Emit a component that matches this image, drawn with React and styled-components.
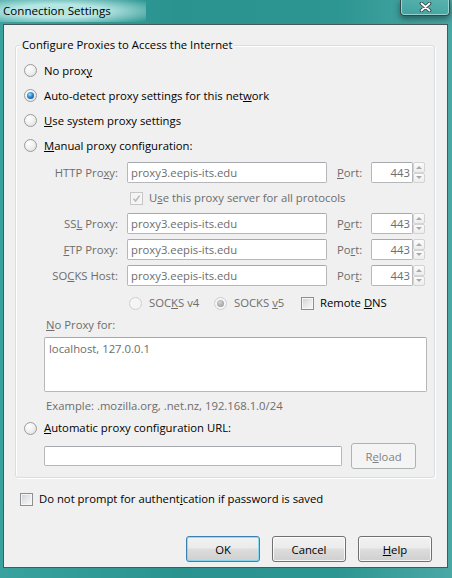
import React from 'react';
import styled, { createGlobalStyle } from 'styled-components';

const GlobalStyle = createGlobalStyle`
    html, body {
        margin: 0;
        padding: 0;
    }
    body {
        width: 452px;
        height: 578px;
        overflow: hidden;
        background: #3a9e9a;
        font-family: 'Open Sans', 'Noto Sans', sans-serif;
        font-size: 11.3px;
        color: #000;
    }
`;

const gray = '#6d6d6d';

// Window chrome
const Window = styled.div`
    width: 452px;
    height: 578px;
    display: flex;
    flex-direction: column;
    background: linear-gradient(90deg, #3aa29e 0%, #2b938f 40%, #2e9692 75%, #4aa8a5 100%);
`;

const TitleBar = styled.div`
    height: 24px;
    flex: none;
    display: flex;
    justify-content: space-between;
    align-items: flex-start;
`;

const Title = styled.span`
    padding: 3px 35px 3px 3px;
    line-height: 16px;
    font-size: 11.6px;
    white-space: nowrap;
    background: radial-gradient(ellipse 78% 75% at 40% 50%, rgba(196, 238, 236, 0.9) 40%, rgba(196, 238, 236, 0) 100%);
`;

const CloseButton = styled.div`
    width: 50px;
    height: 17px;
    margin: -1px 2px 0 0;
    box-sizing: border-box;
    border: 1px solid #33484a;
    border-top: none;
    border-radius: 0 0 4px 4px;
    background: linear-gradient(rgba(120, 200, 198, 0.35), rgba(70, 165, 162, 0.4));
    box-shadow: inset 0 0 0 1px rgba(220, 245, 244, 0.55), 0 3px 6px rgba(20, 40, 40, 0.55);
    display: flex;
    align-items: center;
    justify-content: center;
`;

const Client = styled.div`
    height: 544px;
    margin: 0 4px 0 3px;
    box-sizing: border-box;
    border: 1px solid #4b5656;
    background: #f0f0f0;
    display: flex;
    flex-direction: column;
`;

// Group box
const GroupBox = styled.div`
    position: relative;
    margin: 20px 12px 0 11px;
    padding: 12px 0 8px 8px;
    border: 1px solid #d5dfe5;
    border-radius: 3px;
    box-shadow: inset 1px 1px 0 #fff, 1px 1px 0 #fff;
    display: flex;
    flex-direction: column;
`;

const Caption = styled.span`
    position: absolute;
    top: -9px;
    left: 5px;
    padding: 0 1px;
    line-height: 16px;
    background: #f0f0f0;
`;

const Key = styled.u`
    text-decoration: underline;
    text-underline-offset: 1px;
    text-decoration-thickness: 1px;
`;

// Radio and checkbox
const Choice = styled.label`
    display: flex;
    align-items: center;
    gap: ${({ $gap }) => $gap ?? 7}px;
    height: ${({ $height }) => $height ?? 25}px;
    margin-left: ${({ $indent }) => $indent ?? 0}px;
    line-height: 16px;
    white-space: nowrap;
    color: ${({ $disabled }) => ($disabled ? gray : '#000')};
`;

const RadioRing = styled.span`
    flex: none;
    width: 13px;
    height: 13px;
    box-sizing: border-box;
    border-radius: 50%;
    border: 1px solid ${({ $disabled }) => ($disabled ? '#cfcfcf' : '#9a9c9d')};
    background: ${({ $disabled }) =>
        $disabled
            ? '#f5f5f5'
            : 'radial-gradient(circle at 35% 30%, #ffffff 0%, #eeeeee 55%, #d6d8da 100%)'};
    display: flex;
    align-items: center;
    justify-content: center;
`;

const RadioDot = styled.span`
    width: 7px;
    height: 7px;
    border-radius: 50%;
    background: ${({ $disabled }) =>
        $disabled
            ? 'radial-gradient(circle at 40% 35%, #d6d6d6, #a3a3a3 70%, #8e8e8e)'
            : 'radial-gradient(circle at 40% 35%, #9fe0ff 0%, #2e86cc 45%, #0e3f74 100%)'};
`;

const Box = styled.span`
    flex: none;
    width: 13px;
    height: 13px;
    box-sizing: border-box;
    border: 1px solid ${({ $disabled }) => ($disabled ? '#c6c6c6' : '#8e8f8f')};
    box-shadow: inset 0 0 0 1px #f6f6f6;
    background: ${({ $disabled }) =>
        $disabled ? '#f4f4f4' : 'linear-gradient(135deg, #cdd0d5 0%, #ebecee 60%, #f8f8f8 100%)'};
    display: flex;
    align-items: center;
    justify-content: center;
`;

const Radio = ({ checked, disabled, children, ...rest }) => (
    <Choice $disabled={disabled} {...rest}>
        <RadioRing $disabled={disabled}>{checked && <RadioDot $disabled={disabled} />}</RadioRing>
        <span>{children}</span>
    </Choice>
);

const Check = ({ checked, disabled, children, ...rest }) => (
    <Choice $disabled={disabled} $gap={6} {...rest}>
        <Box $disabled={disabled}>
            {checked && (
                <svg width="9" height="9" viewBox="0 0 9 9">
                    <path d="M1.5 4.8 L3.6 7 L7.6 1.6" fill="none" stroke={disabled ? '#b8b8b8' : '#1f3f7a'} strokeWidth="1.5" />
                </svg>
            )}
        </Box>
        <span>{children}</span>
    </Choice>
);

// Proxy fields
const FieldRow = styled.div`
    display: flex;
    align-items: center;
    height: 21px;
    margin-top: ${({ $top }) => $top ?? 0}px;
`;

const FieldLabel = styled.span`
    width: 94px;
    margin-right: 9px;
    text-align: right;
    white-space: nowrap;
    color: ${gray};
`;

const TextBox = styled.input`
    box-sizing: border-box;
    width: ${({ $width }) => $width}px;
    height: ${({ $height }) => $height ?? 21}px;
    margin: 0 0 0 ${({ $indent }) => $indent ?? 0}px;
    padding: 0 ${({ $right }) => ($right ? 2 : 0)}px 0 ${({ $right }) => ($right ? 0 : 3)}px;
    border: 1px solid #b5b7bb;
    border-top-color: #a5a8ad;
    border-radius: 2px;
    background: #fff;
    font: inherit;
    color: ${gray};
    text-align: ${({ $right }) => ($right ? 'right' : 'left')};
    outline: none;
`;

const PortLabel = styled.span`
    width: 34px;
    margin-left: 10px;
    color: ${gray};
`;

const Spin = styled.div`
    display: flex;
    flex-direction: column;
    width: 12px;
    height: 21px;
`;

const SpinButton = styled.span`
    flex: 1;
    box-sizing: border-box;
    border: 1px solid #d3d3d3;
    border-radius: 2px;
    background: linear-gradient(#fbfbfb, #ededed);
    display: flex;
    align-items: center;
    justify-content: center;
    &::before {
        content: '';
        border-left: 3px solid transparent;
        border-right: 3px solid transparent;
        ${({ $down }) => ($down ? 'border-top: 3px solid #a9a9a9;' : 'border-bottom: 3px solid #a9a9a9;')}
    }
`;

const SocksRow = styled.div`
    display: grid;
    grid-template-columns: 85px 87px auto;
    height: 22px;
    margin: 6px 0 0 105px;
    align-items: center;
`;

const NoteRow = styled.div`
    height: ${({ $height }) => $height}px;
    display: flex;
    align-items: center;
    padding-left: 22px;
    line-height: 16px;
    color: ${gray};
`;

const Exceptions = styled.textarea`
    box-sizing: border-box;
    width: 383px;
    height: 55px;
    margin: 1px 0 0 20px;
    padding: 3px 4px;
    border: 1px solid #b5b7bb;
    border-top-color: #a5a8ad;
    border-radius: 2px;
    background: #fff;
    font: inherit;
    line-height: 16px;
    color: ${gray};
    resize: none;
    outline: none;
`;

const UrlRow = styled.div`
    display: flex;
    align-items: center;
    height: 26px;
    margin-top: 7px;
    gap: 9px;
`;

// Buttons
const Button = styled.button`
    box-sizing: border-box;
    width: ${({ $width }) => $width ?? 74}px;
    height: 26px;
    padding: 0;
    font: inherit;
    color: #000;
    border: 1px solid ${({ $primary }) => ($primary ? '#3c7fb1' : '#707070')};
    border-radius: 3px;
    background: linear-gradient(#f2f2f2 0%, #ebebeb 46%, #dddddd 50%, #cfcfcf 100%);
    box-shadow: inset 0 0 0 1px ${({ $primary }) => ($primary ? 'rgba(110, 215, 245, 0.75)' : 'rgba(255, 255, 255, 0.8)')};
    &:disabled {
        border-color: #adb2b5;
        background: #f4f4f4;
        box-shadow: none;
        color: #838383;
    }
`;

const ButtonBar = styled.div`
    display: flex;
    justify-content: flex-end;
    gap: 12px;
    margin-top: 29px;
    padding-right: 15px;
`;

const ports = [
    { label: <>SS<Key>L</Key> Proxy:</>, port: <>P<Key>o</Key>rt:</>, top: 0 },
    { label: <><Key>F</Key>TP Proxy:</>, port: <>Po<Key>r</Key>t:</>, top: 5 },
    { label: <>SO<Key>C</Key>KS Host:</>, port: <>Por<Key>t</Key>:</>, top: 5 },
];

const ProxyField = ({ label, port, top }) => (
    <FieldRow $top={top}>
        <FieldLabel>{label}</FieldLabel>
        <TextBox $width={200} value="proxy3.eepis-its.edu" readOnly />
        <PortLabel>{port}</PortLabel>
        <TextBox $width={42} $right value="443" readOnly />
        <Spin>
            <SpinButton />
            <SpinButton $down />
        </Spin>
    </FieldRow>
);

export default function App() {
    return (
        <>
            <GlobalStyle />
            <Window>
                <TitleBar>
                    <Title>Connection Settings</Title>
                    <CloseButton>
                        <svg width="13" height="10" viewBox="0 0 13 10">
                            <path d="M2.5 1.5 L10.5 8.5 M10.5 1.5 L2.5 8.5" stroke="#2c3a3c" strokeWidth="3.6" strokeLinecap="round" />
                            <path d="M2.5 1.5 L10.5 8.5 M10.5 1.5 L2.5 8.5" stroke="#ffffff" strokeWidth="1.9" strokeLinecap="round" />
                        </svg>
                    </CloseButton>
                </TitleBar>
                <Client>
                    <GroupBox>
                        <Caption>Configure Proxies to Access the Internet</Caption>
                        <Radio>No prox<Key>y</Key></Radio>
                        <Radio checked>Auto-detect proxy settings for this net<Key>w</Key>ork</Radio>
                        <Radio><Key>U</Key>se system proxy settings</Radio>
                        <Radio><Key>M</Key>anual proxy configuration:</Radio>

                        <ProxyField top={4} label={<>HTTP Pro<Key>x</Key>y:</>} port={<><Key>P</Key>ort:</>} />
                        <Check checked disabled $height={30} $indent={106}>
                            U<Key>s</Key>e this proxy server for all protocols
                        </Check>
                        {ports.map((p, i) => (
                            <ProxyField key={i} {...p} />
                        ))}

                        <SocksRow>
                            <Radio disabled $height={22}>SOC<Key>K</Key>S v4</Radio>
                            <Radio disabled checked $height={22}>SOCKS <Key>v</Key>5</Radio>
                            <Check $height={22}>Remote <Key>D</Key>NS</Check>
                        </SocksRow>

                        <NoteRow $height={22}><span><Key>N</Key>o Proxy for:</span></NoteRow>
                        <Exceptions value="localhost, 127.0.0.1" readOnly />
                        <NoteRow $height={28}>Example: .mozilla.org, .net.nz, 192.168.1.0/24</NoteRow>

                        <Radio $height={16}><Key>A</Key>utomatic proxy configuration URL:</Radio>
                        <UrlRow>
                            <TextBox $width={298} $height={20} $indent={20} value="" readOnly />
                            <Button $width={65} disabled>R<Key>e</Key>load</Button>
                        </UrlRow>
                    </GroupBox>

                    <Check $height={16} $indent={16} style={{ marginTop: 13 }}>
                        Do not prompt for authent<Key>i</Key>cation if password is saved
                    </Check>

                    <ButtonBar>
                        <Button $primary>OK</Button>
                        <Button>Cancel</Button>
                        <Button><Key>H</Key>elp</Button>
                    </ButtonBar>
                </Client>
            </Window>
        </>
    );
}
